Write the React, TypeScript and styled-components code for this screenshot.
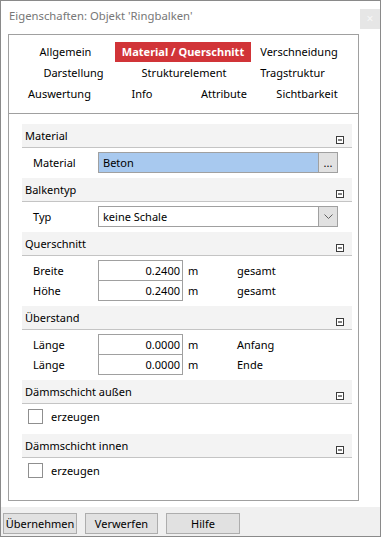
import React from "react";
import styled, { createGlobalStyle } from "styled-components";

const Global = createGlobalStyle`
  html, body { margin: 0; padding: 0; background: #fff; }
  body { font-family: "Noto Sans", "Segoe UI", sans-serif; font-size: 11px; color: #000; }
  * { box-sizing: border-box; }
`;

const Window = styled.div`
  width: 381px;
  height: 537px;
  border: 1px solid #8a8a8a;
  background: #fff;
  display: flex;
  flex-direction: column;
`;

const TitleBar = styled.div`
  height: 33px;
  display: flex;
  align-items: flex-start;
  justify-content: space-between;
`;

const Title = styled.div`
  padding: 7px 0 0 8px;
  line-height: 16px;
  font-size: 11.3px;
  color: #777;
`;

const CloseButton = styled.div`
  margin-top: 8px;
  width: 20px;
  height: 20px;
  background: #e6e6e6;
  color: #f7f7f7;
  font-size: 12px;
  line-height: 20px;
  text-align: center;
`;

const Panel = styled.div`
  margin-left: 7px;
  width: 351px;
  height: 467px;
  border: 1px solid #a0a0a0;
  display: flex;
  flex-direction: column;
`;

const TabArea = styled.div`
  height: 79px;
  padding-top: 7px;
  border-bottom: 1px solid #a0a0a0;
  display: flex;
  flex-direction: column;
`;

const TabRow = styled.div<{ $gap?: number }>`
  display: flex;
  height: 21px;
  padding-left: 11px;
  gap: ${(p) => p.$gap ?? 0}px;
`;

const Tab = styled.div<{ $w: number; $active?: boolean }>`
  width: ${(p) => p.$w}px;
  height: 20px;
  line-height: 20px;
  text-align: center;
  white-space: nowrap;
  background: ${(p) => (p.$active ? "#d13438" : "transparent")};
  color: ${(p) => (p.$active ? "#fff" : "#000")};
  font-weight: ${(p) => (p.$active ? 700 : 400)};
`;

const Sections = styled.div`
  padding: 10px 6px 0 13px;
  display: flex;
  flex-direction: column;
`;

const SectionHeader = styled.div`
  height: 24px;
  background: #f3f3f3;
  border-bottom: 1px solid #c4c4c4;
  display: flex;
  justify-content: space-between;
`;

const SectionTitle = styled.div`
  padding: 4px 0 0 3px;
  line-height: 16px;
`;

const CollapseIcon = styled.svg`
  align-self: flex-end;
  margin: 0 8px 3px 0;
`;

const SectionBody = styled.div`
  padding: 4px 0 5px;
  display: flex;
  flex-direction: column;
`;

const Row = styled.div`
  display: flex;
  align-items: center;
  height: 21px;
  padding-left: 11px;
  & + & {
    margin-top: -1px;
  }
`;

const Label = styled.div`
  width: 65px;
  line-height: 16px;
`;

const Field = styled.div<{ $w: number; $bg?: string; $right?: boolean }>`
  width: ${(p) => p.$w}px;
  height: 21px;
  border: 1px solid #a0a0a0;
  background: ${(p) => p.$bg ?? "#fff"};
  line-height: 19px;
  padding: ${(p) => (p.$right ? "0 2px 0 0" : "0 0 0 4px")};
  text-align: ${(p) => (p.$right ? "right" : "left")};
`;

const SideButton = styled.div`
  width: 20px;
  height: 21px;
  margin-left: -1px;
  border: 1px solid #a0a0a0;
  background: #e1e1e1;
  display: flex;
  align-items: center;
  justify-content: center;
  line-height: 19px;
  color: #000;
`;

const Unit = styled.div<{ $w?: number }>`
  width: ${(p) => p.$w ?? 49}px;
  padding-left: 5px;
  line-height: 16px;
`;

const CheckRow = styled.div`
  display: flex;
  align-items: flex-start;
  height: 21px;
  padding: 1px 0 0 6px;
`;

const CheckBox = styled.div`
  width: 15px;
  height: 15px;
  border: 1px solid #8f8f8f;
  background: #fff;
`;

const CheckLabel = styled.div`
  margin-left: 8px;
  line-height: 16px;
`;

const Footer = styled.div`
  margin-top: 6px;
  flex: 1;
  background: #f0f0f0;
  display: flex;
  gap: 8px;
  padding: 6px 0 0 2px;
`;

const Button = styled.div<{ $w: number }>`
  width: ${(p) => p.$w}px;
  height: 21px;
  border: 1px solid #adadad;
  background: #e1e1e1;
  text-align: center;
  line-height: 19px;
`;

const Minus = () => (
  <CollapseIcon width="8" height="8" viewBox="0 0 8 8">
    <rect x="0.5" y="0.5" width="7" height="7" fill="#fff" stroke="#3c3c3c" />
    <line x1="2" y1="4" x2="6" y2="4" stroke="#000" />
  </CollapseIcon>
);

const Chevron = () => (
  <svg width="9" height="5" viewBox="0 0 9 5">
    <polyline points="0.5,0.5 4.5,4.5 8.5,0.5" fill="none" stroke="#606060" />
  </svg>
);

const Section: React.FC<{ title: string; children: React.ReactNode }> = ({ title, children }) => (
  <>
    <SectionHeader>
      <SectionTitle>{title}</SectionTitle>
      <Minus />
    </SectionHeader>
    <SectionBody>{children}</SectionBody>
  </>
);

const NumRow: React.FC<{ label: string; value: string; note: string }> = ({ label, value, note }) => (
  <Row>
    <Label>{label}</Label>
    <Field $w={85} $right>{value}</Field>
    <Unit>m</Unit>
    <Unit $w={60}>{note}</Unit>
  </Row>
);

export default function App() {
  return (
    <>
      <Global />
      <Window>
        <TitleBar>
          <Title>Eigenschaften: Objekt 'Ringbalken'</Title>
          <CloseButton>×</CloseButton>
        </TitleBar>
        <Panel>
          <TabArea>
            <TabRow $gap={4}>
              <Tab $w={91}>Allgemein</Tab>
              <Tab $w={136} $active>Material / Querschnitt</Tab>
              <Tab $w={88}>Verschneidung</Tab>
            </TabRow>
            <TabRow>
              <Tab $w={107}>Darstellung</Tab>
              <Tab $w={114}>Strukturelement</Tab>
              <Tab $w={103}>Tragstruktur</Tab>
            </TabRow>
            <TabRow>
              <Tab $w={79}>Auswertung</Tab>
              <Tab $w={86}>Info</Tab>
              <Tab $w={78}>Attribute</Tab>
              <Tab $w={88}>Sichtbarkeit</Tab>
            </TabRow>
          </TabArea>
          <Sections>
            <Section title="Material">
              <Row>
                <Label>Material</Label>
                <Field $w={221} $bg="#a8c9ef">Beton</Field>
                <SideButton>...</SideButton>
              </Row>
            </Section>
            <Section title="Balkentyp">
              <Row>
                <Label>Typ</Label>
                <Field $w={221}>keine Schale</Field>
                <SideButton>
                  <Chevron />
                </SideButton>
              </Row>
            </Section>
            <Section title="Querschnitt">
              <NumRow label="Breite" value="0.2400" note="gesamt" />
              <NumRow label="Höhe" value="0.2400" note="gesamt" />
            </Section>
            <Section title="Überstand">
              <NumRow label="Länge" value="0.0000" note="Anfang" />
              <NumRow label="Länge" value="0.0000" note="Ende" />
            </Section>
            <Section title="Dämmschicht außen">
              <CheckRow>
                <CheckBox />
                <CheckLabel>erzeugen</CheckLabel>
              </CheckRow>
            </Section>
            <Section title="Dämmschicht innen">
              <CheckRow>
                <CheckBox />
                <CheckLabel>erzeugen</CheckLabel>
              </CheckRow>
            </Section>
          </Sections>
        </Panel>
        <Footer>
          <Button $w={74}>Übernehmen</Button>
          <Button $w={73}>Verwerfen</Button>
          <Button $w={74}>Hilfe</Button>
        </Footer>
      </Window>
    </>
  );
}
